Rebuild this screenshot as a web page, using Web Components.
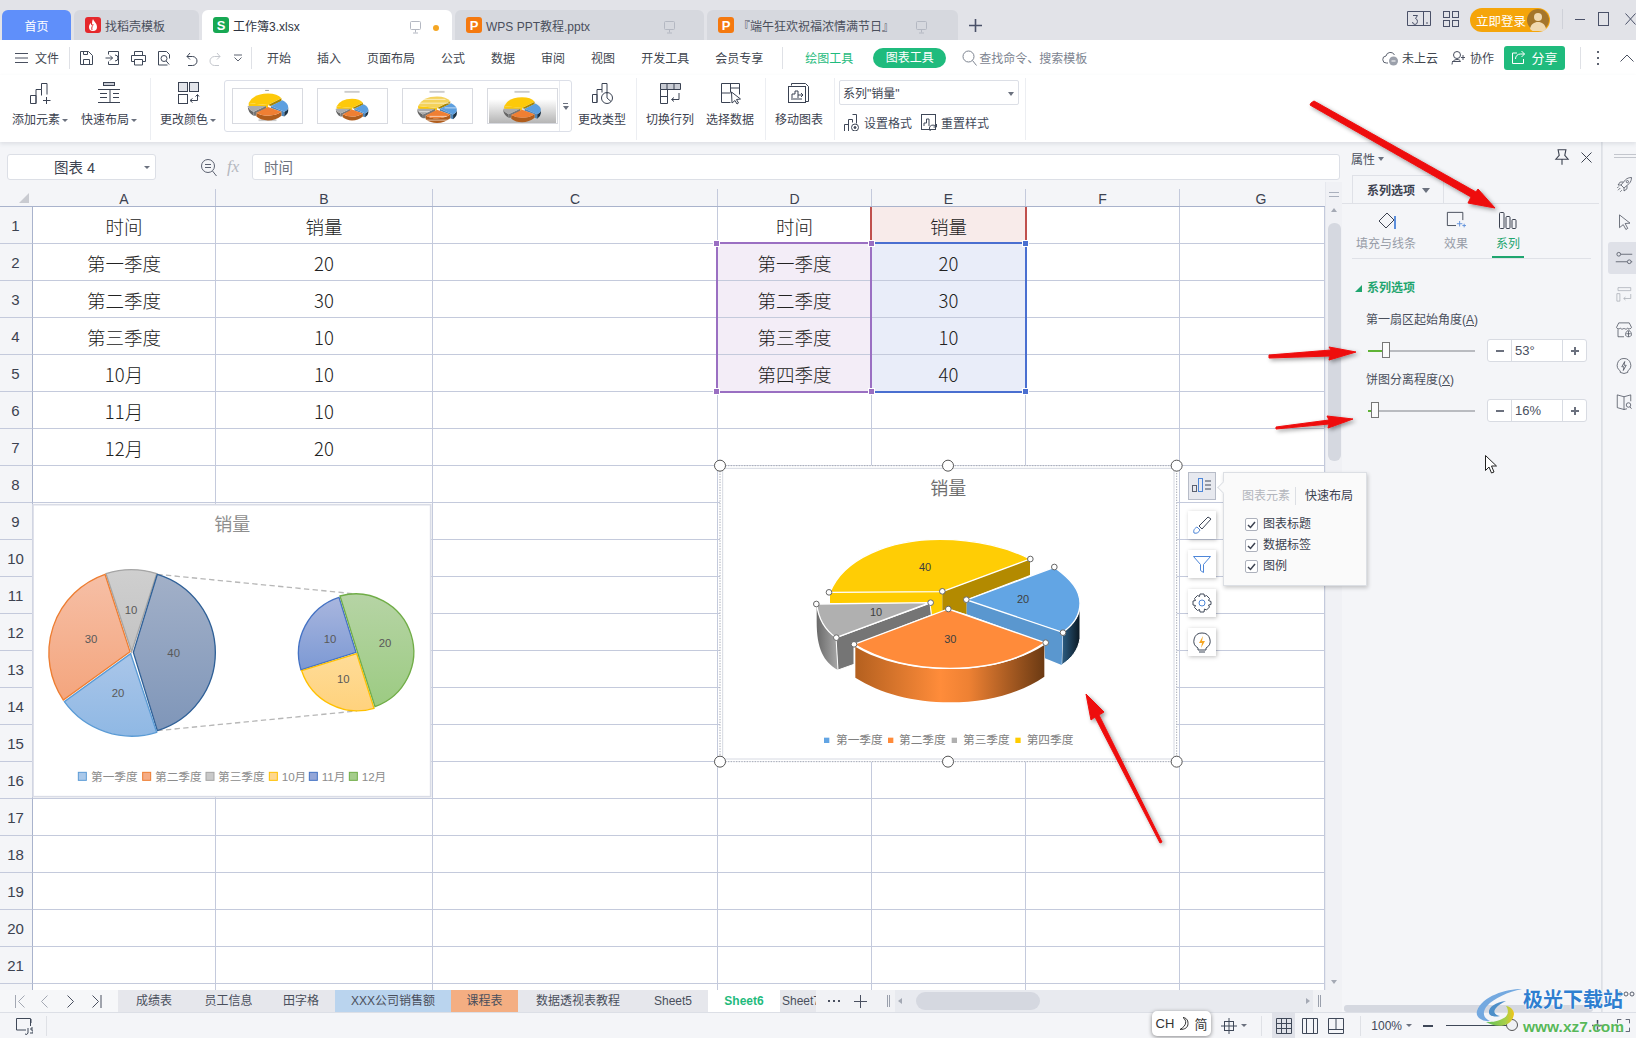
<!DOCTYPE html>
<html lang="zh">
<head>
<meta charset="utf-8">
<title>WPS 表格</title>
<style>
  html, body { margin: 0; padding: 0; }
  body {
    width: 1636px; height: 1038px; overflow: hidden; position: relative;
    font-family: "Liberation Sans", "Noto Sans CJK SC", sans-serif;
    font-size: 12px; color: #3c4250; background: #f4f5f8;
  }
  .left-col { display: flex; flex-direction: column; width: 1342px; }
  .work { display: flex; height: 870px; }
</style>
</head>
<body>
<wps-tabbar></wps-tabbar>
<wps-menu></wps-menu>
<wps-ribbon></wps-ribbon>
<div class="work">
  <div class="left-col">
    <wps-formula></wps-formula>
    <wps-sheet></wps-sheet>
    <wps-sheet-tabs></wps-sheet-tabs>
  </div>
  <wps-panel></wps-panel>
  <wps-strip></wps-strip>
</div>
<wps-status></wps-status>

<chart-pie-of-pie></chart-pie-of-pie>
<chart-pie-3d></chart-pie-3d>
<chart-tools></chart-tools>
<ime-box></ime-box>
<water-mark></water-mark>
<red-arrows></red-arrows>

<script>
// icono de trazo fino, mismo estilo en toda la app
const icon = (body, size = 24, box = 24) =>
  `<svg width="${size}" height="${size}" viewBox="0 0 ${box} ${box}" fill="none" stroke="currentColor" stroke-width="1" style="display:block">${body}</svg>`;

const ICONS = {
  addEl: '<path d="M2.500 14.500h5.500v8H2.500zM8 22.500v-14h5.500v6M13.500 8.500v-6h5.500v11"/><path d="M18.500 16v7M15 19.500h7.500"/>',
  layout: '<rect x="6.500" y="1.500" width="11" height="3" fill="#c9ccd4"/><path d="M1 8.500h22M3 12.500h7M3 16.500h7M1 21.500h22M13 8.500v13M16 12.500h6M16 16.500h6"/>',
  colors: '<rect x="2.500" y="1.500" width="9" height="9" fill="#e3e5ea"/><rect x="13.500" y="1.500" width="9" height="9" fill="#e3e5ea"/><rect x="2.500" y="13.500" width="9" height="9"/><path d="M21.500 14v5.500h-7M16.500 17.500l-2.500 2 2.500 2M19.500 15.500l2-2 1.500 2"/>',
  chType: '<path d="M2.500 13.500h4.500v8h-4.500zM7 21.500v-13h5v3M12 8.500v-6h5v10"/><circle cx="17" cy="17" r="5.500"/><path d="M17 11.500v5.500l4 3.500"/>',
  swap: '<path d="M2.500 2.500h20v6h-20zM9 2.500v6M16 2.500v6" fill="#c9ccd4"/><path d="M2.500 8.500v14h7v-14M2.500 15.500h7M21 12v6.500h-7M16 16.500l-2.500 2 2.500 2"/>',
  select: '<path d="M3.500 2.500h18v11M3.500 2.500v19h9M3.500 12h9M12.500 2.500v9M21.500 7h-9"/><path d="M13.500 11l9 7-4 .5 2 3.500-1.500 1-2-3.500-3 2.500z"/>',
  move: '<path d="M4.500 4.500V2.500h14l3 3v15H19"/><rect x="1.500" y="5.500" width="17" height="16"/><path d="M5 17v-4h3v-3h3v7M4 18h11M14 12l2 2-2 2M11 14h5"/>',
  format: '<path d="M1.500 11.500h4v7h-4zM5.500 18.500v-12h4v3M9.500 1.500h4v9"/><circle cx="12" cy="14.500" r="3.500"/><circle cx="12" cy="14.500" r="1" fill="currentColor"/>',
  reset: '<rect x="1.500" y="1.500" width="14" height="15"/><path d="M4 13v-3h2.500v-4H9v7M13 19a3.500 3.500 0 1 1 3-5M16.500 11v3h-3"/>',
  save: '<path d="M2.500 1.500h8l4 4v9h-12zM5.500 14.500v-5h6v5M5.500 1.500v3h4v-3"/>',
  sync: '<path d="M4.500 4.500v-3h10v13h-10v-3"/><path d="M1.500 8h7M6 5.500l2.500 2.500-2.500 2.500M11 5a3 3 0 0 1 0 6"/>',
  print: '<path d="M4.500 5.500v-4h8v4M4.500 11.500h-3v-6h14v6h-3"/><path d="M4.500 9.500h8v5.500h-8z"/>',
  preview: '<path d="M11.500 15h-9V1.500h8l3 3v4"/><circle cx="8" cy="8.500" r="3"/><path d="M10.200 11l3 3.500"/>',
  undo: '<path d="M5 6.500h5.500a4.500 4.500 0 0 1 0 9H6M5 6.500l3-3.500M5 6.500l3 3"/>',
  redo: '<path d="M12 6.500H6.500a4.500 4.500 0 0 0 0 9H11M12 6.500l-3-3.500M12 6.500l-3 3"/>',
  fill: '<path d="M3 10l8-8 7 7-8 8z"/><path d="M19 5v13" stroke="#5d8fdc" stroke-width="2"/>',
  effect: '<path d="M11 16H1.500V1.500h17V10" /><path d="M15 11v6M12 14h6M20 14v4M18 16h4" stroke="#5d8fdc"/>',
  series: '<rect x="1.500" y="1.500" width="4.500" height="16" rx="1"/><rect x="8" y="5.500" width="4" height="12" rx="1"/><rect x="14" y="8.500" width="4" height="9" rx="1"/>',
  rocket: '<path d="M8 12L14 5c2-2 5-3 8-3 0 3-1 6-3 8l-7 6zM8 12H4l3-4h4M12 16v4l4-3v-4M7 16l-3 3M9 19l-2 2M5 14l-2 2"/><circle cx="16.500" cy="7.500" r="1.500"/>',
  pointer: '<path d="M6 2.500l14 11-6.500 .5 3.500 6.500-2.500 1.500-3.500-6.500-5 4z"/>',
  sliders: '<circle cx="5" cy="7" r="2.500"/><path d="M8 7h15M1 17h15M21.500 17h1.500"/><circle cx="19" cy="17" r="2.500"/>',
  swapBox: '<path d="M4 3.500h17v4H4zM2.500 11.500h4v10h-4zM21 12v6h-9M14 16l-2.500 2 2.500 2"/>',
  shop: '<path d="M5 2.500h14l3 6a3 3 0 0 1-5 1 3 3 0 0 1-5 0 3 3 0 0 1-5 0 3 3 0 0 1-5-1zM4 11v10h8"/><path d="M18 12c-3 2-4 4-4 6s2 3 4 3 4-1 4-3-1-4-4-6zM18 13v8M15 17h6"/>',
  boltBulb: '<path d="M12 2a9 9 0 0 1 5 16.500v2l-5 1.500-5-1.500v-2A9 9 0 0 1 12 2z"/><path d="M13 6l-4 7h3l-1 5 4-7h-3z"/>',
  bookFind: '<path d="M12 5L3 2.500v17l9 2.500 4-1M12 5l9-2.500V11M12 5v17"/><circle cx="18" cy="16" r="3"/><path d="M20 18.500l2 2.500"/>',
  pin: '<path d="M5.500 2.500h7l-1 5 3 3.500h-11l3-3.500zM9 11v5"/>',
  monitor: '<rect x="2.500" y="2.500" width="10" height="8" rx="1"/><path d="M7.500 10.500v3M5 14h5"/>'
};

class WpsTabbar extends HTMLElement {
  constructor() { super(); this.attachShadow({ mode: 'open' }); }
  connectedCallback() {
    this.shadowRoot.innerHTML = `
      <style>
        :host { display: flex; height: 40px; background: #e2e3e8; box-sizing: border-box; padding: 10px 0 0 2px; gap: 3px; align-items: stretch; position: relative; }
        .tab { background: #d6d8de; border-radius: 6px 6px 0 0; display: flex; align-items: center; padding-left: 11px; box-sizing: border-box; color: #4a4f5c; position: relative; white-space: nowrap; overflow: hidden; }
        .tab.home { background: #5f8ffa; color: #fff; width: 69px; justify-content: center; padding: 0; }
        .tab.active { background: #fff; color: #2e3340; }
        .logo { width: 16px; height: 16px; border-radius: 3px; margin-right: 4px; display: flex; align-items: center; justify-content: center; color: #fff; font-weight: bold; font-size: 13px; flex: none; }
        .mon { position: absolute; top: 9px; color: #b4b8c2; }
        .dot { position: absolute; left: 231px; top: 15px; width: 6px; height: 6px; background: #f5a623; border-radius: 50%; }
        .plus { margin-left: 7px; width: 16px; display: flex; align-items: center; color: #4a5168; }
        .right { position: absolute; top: 0; left: 0; right: 0; height: 40px; pointer-events: none; }
        .right > * { position: absolute; }
        .login { left: 1470px; top: 8px; width: 80px; height: 24px; background: #f5a50a; border-radius: 12px; color: #fff; display: flex; align-items: center; padding-left: 6px; box-sizing: border-box; font-size: 12.500px; }
        .login svg { position: absolute; right: 1px; top: 1px; }
        .wsep { left: 1562px; top: 9px; width: 1px; height: 20px; background: #cfd1d8; }
      </style>
      <div class="tab home">首页</div>
      <div class="tab" style="width:125px"><span class="logo" style="background:#e5282c">
        <svg width="12" height="14" viewBox="0 0 12 14"><path d="M6 1c1 3 4 4 4 8a4 4 0 0 1-8 0c0-2 1-3 1.500-4 .5 1 .5 2 1.500 2.500C5 5 5 3 6 1z" fill="#fff"/><path d="M6 6c0 2-2 3-1 6" stroke="#e5282c" fill="none"/></svg>
      </span>找稻壳模板</div>
      <div class="tab active" style="width:250px"><span class="logo" style="background:#17a853">S</span>工作簿3.xlsx
        <span class="mon" style="left:206px">${icon(ICONS.monitor, 15, 15)}</span><span class="dot"></span></div>
      <div class="tab" style="width:249px"><span class="logo" style="background:#f5790f">P</span>WPS PPT教程.pptx
        <span class="mon" style="left:207px">${icon(ICONS.monitor, 15, 15)}</span></div>
      <div class="tab" style="width:251px"><span class="logo" style="background:#f5790f">P</span>『端午狂欢祝福浓情满节日』
        <span class="mon" style="left:207px">${icon(ICONS.monitor, 15, 15)}</span></div>
      <div class="plus"><svg width="15" height="15" viewBox="0 0 15 15" stroke="currentColor" stroke-width="1.600"><path d="M7.500 1v13M1 7.500h13"/></svg></div>
      <div class="right">
        <svg style="left:1407px;top:11px" width="25" height="16" viewBox="0 0 25 16" fill="none" stroke="#4a5168"><path d="M.5.500h23v14H.5zM16.500.500v14"/><path d="M6 4.500h4.500l-2 3a2.500 3 0 1 1-3 3.500M19 12h2"/></svg>
        <svg style="left:1443px;top:11px" width="16" height="16" viewBox="0 0 16 16" fill="none" stroke="#4a5168"><rect x=".5" y=".5" width="6" height="6"/><rect x="9.500" y=".5" width="6" height="6"/><rect x=".5" y="9.500" width="6" height="6"/><rect x="9.500" y="9.500" width="6" height="6"/></svg>
        <div class="login">立即登录
          <svg width="22" height="22" viewBox="0 0 22 22"><circle cx="11" cy="11" r="11" fill="#a5762a"/><circle cx="11" cy="8" r="4" fill="#f0d9b0"/><path d="M3 20c1-5 4-7 8-7s7 2 8 7a11 11 0 0 1-16 0z" fill="#f0d9b0"/></svg>
        </div>
        <div class="wsep"></div>
        <svg style="left:1575px;top:14px" width="10" height="10" stroke="#4a5168"><path d="M0 5.500h10"/></svg>
        <svg style="left:1598px;top:12px" width="11" height="14" fill="none" stroke="#4a5168"><rect x=".5" y=".5" width="10" height="13"/></svg>
        <svg style="left:1625px;top:13px" width="11" height="12" fill="none" stroke="#4a5168"><path d="M.5.500l10 11M10.500.500l-10 11"/></svg>
      </div>`;
  }
}

class WpsMenu extends HTMLElement {
  constructor() { super(); this.attachShadow({ mode: 'open' }); }
  connectedCallback() {
    const tabs = ['开始', '插入', '页面布局', '公式', '数据', '审阅', '视图', '开发工具', '会员专享'];
    const quick = ['save', 'sync', 'print', 'preview', 'undo', 'redo'];
    this.shadowRoot.innerHTML = `
      <style>
        :host { display: flex; height: 35px; background: #fff; align-items: center; padding-left: 15px; box-sizing: border-box; white-space: nowrap; color: #41464f; }
        .sep { width: 1px; height: 22px; background: #dfe1e6; flex: none; }
        .quick { display: flex; gap: 10px; align-items: center; margin-left: 8px; color: #3f4858; }
        .tabs { display: flex; gap: 26px; margin-left: 15px; }
        .pill { margin-left: 20px; width: 73px; height: 20px; line-height: 20px; border-radius: 10px; background: #1fbb7d; color: #fff; text-align: center; }
        .find { margin-left: 16px; display: flex; align-items: center; gap: 2px; color: #7d8490; }
        .right { margin-left: auto; display: flex; align-items: center; }
        .share { margin-left: 10px; width: 61px; height: 24px; background: #1fbb7d; border-radius: 3px; color: #fff; display: flex; align-items: center; justify-content: center; gap: 5px; font-size: 13px; }
      </style>
      <svg width="13" height="12" stroke="#4a5060"><path d="M0 1.500h13M0 6h13M0 10.500h13"/></svg>
      <span style="margin-left:7px">文件</span>
      <div class="sep" style="margin-left:10px"></div>
      <div class="quick">
        ${quick.map(k => `<span style="${k === 'redo' ? 'color:#c4c7cd' : ''}">${icon(ICONS[k], 16, 16)}</span>`).join('')}
        <svg width="8" height="8" fill="none" stroke="#5d6370"><path d="M0 1h8M.5 3.500l3.500 3.500 3.500-3.500"/></svg>
      </div>
      <div class="sep" style="margin-left:9px"></div>
      <div class="tabs">${tabs.map(t => `<span>${t}</span>`).join('')}</div>
      <div class="sep" style="margin-left:19px"></div>
      <span style="margin-left:22px;color:#1fbb7d">绘图工具</span>
      <div class="pill">图表工具</div>
      <div class="find">
        <svg width="15" height="16" fill="none" stroke="#7d8490"><circle cx="6.500" cy="6.500" r="5.500"/><path d="M10.500 10.500l4 5"/></svg>
        查找命令、搜索模板
      </div>
      <div class="right">
        <svg width="17" height="17" viewBox="0 0 17 17" fill="none" stroke="#5d6370"><path d="M6 14H4.500a3.500 3.500 0 0 1-.5-7A4.500 4.500 0 0 1 12.500 6"/><circle cx="11.500" cy="12" r="4.500" fill="#9ba0ab" stroke="none"/><path d="M9.500 12h4" stroke="#fff"/></svg>
        <span style="margin-left:3px">未上云</span>
        <svg style="margin-left:13px" width="15" height="16" viewBox="0 0 15 16" fill="none" stroke="#4a5060"><circle cx="6" cy="5" r="3.500"/><path d="M1 14.500c0-3 2-5 5-5 2 0 3 .5 3.500 2H1M12 5v5M10 7.500h4"/></svg>
        <span style="margin-left:4px">协作</span>
        <div class="share">
          <svg width="15" height="15" viewBox="0 0 15 15" fill="none" stroke="#fff"><path d="M6 3H1.500v10.500h11V9M4.500 9c0-3 2-5 5-5h4M10.500 1l3 3-3 3"/></svg>分享
        </div>
        <div class="sep" style="margin-left:15px"></div>
        <svg style="margin-left:16px" width="3" height="14" fill="#5d6370"><rect y="0" width="2" height="2"/><rect y="6" width="2" height="2"/><rect y="12" width="2" height="2"/></svg>
        <svg style="margin-left:20px;margin-right:2px" width="14" height="8" fill="none" stroke="#4a5060"><path d="M.5 7.500L7 1l6.500 6.500"/></svg>
      </div>`;
  }
}

// boton grande de la cinta: icono arriba, etiqueta abajo
class RbButton extends HTMLElement {
  constructor() { super(); this.attachShadow({ mode: 'open' }); }
  connectedCallback() {
    const caret = this.hasAttribute('caret');
    this.shadowRoot.innerHTML = `
      <style>
        :host { display: flex; flex-direction: column; align-items: center; box-sizing: border-box; padding-top: 6px; flex: none; }
        .ic { height: 24px; color: #3a4252; }
        .lb { margin-top: 7px; line-height: 16px; white-space: nowrap; display: flex; align-items: center; color: #3c4250; }
        i { display: block; margin-left: 2px; border: 3px solid transparent; border-top: 3.500px solid #6b717e; border-bottom: 0; }
      </style>
      <div class="ic">${icon(ICONS[this.getAttribute('icon')])}</div>
      <div class="lb">${this.getAttribute('label')}${caret ? '<i></i>' : ''}</div>`;
  }
}

// miniatura de la galeria de estilos
const miniPie = (cx, cy, s, stripes) => `
  <g transform="translate(${cx} ${cy}) scale(${s})">
    <path d="M0-1L14-8V-5L3 0z" fill="#a88500"/>
    <path d="M-20-3L0-1V2L-20 0z" fill="#fdc90a"/>
    <path d="M-20-3Q-15-13 0-13 10-13 14-8L0-1z" fill="${stripes ? '#f4d25a' : '#fdc90a'}"/>
    <path d="M-21 0Q-20 4-15 6V10Q-21 7-21 0z" fill="#666"/>
    <path d="M-15 6L-2 0V3L-12 7V10H-15z" fill="#777"/>
    <path d="M-21 0H-2L-15 6Q-20 4-21 0z" fill="#acacac"/>
    <path d="M3 0L17 6V11L14 10V6L3 2z" fill="#4f86ba"/>
    <path d="M17 6Q21 4 21 1V5Q21 8 17 11z" fill="#1c3347"/>
    <path d="M3 0L15-6Q21-3 21 1 21 4 17 6z" fill="#5d9fdf"/>
    <path d="M-12 7Q-7 10 0 10 8 10 14 6V10Q8 15 0 15-7 15-12 11z" fill="#b05d1c"/>
    <path d="M0 1L14 6Q8 10 0 10-7 10-12 7z" fill="#ef7f33"/>
    ${stripes ? '<path d="M-19-6H14M-14-10H9M-8 8H10M-11 12H13M-19 3H-8M8-1H20" stroke="#fff" stroke-width=".8" opacity=".8"/>' : ''}
  </g>`;

class RbGallery extends HTMLElement {
  constructor() { super(); this.attachShadow({ mode: 'open' }); }
  connectedCallback() {
    const thumbs = [
      `<rect x="33" y="1" width="4" height="1" fill="#999"/><rect x="26" y="32" width="19" height="2" fill="#ccc"/>${miniPie(36, 18, 1.02)}`,
      `<rect x="27" y="2" width="16" height="2" fill="#ccc"/>${miniPie(35, 21, .82)}`,
      `<rect x="27" y="2" width="16" height="2" fill="#ccc"/>${miniPie(35, 21, 1, true)}`,
      `<defs><linearGradient id="gr" x1="0" y1="0" x2="0" y2="1"><stop offset=".3" stop-color="#fff"/><stop offset="1" stop-color="#b5b5b5"/></linearGradient></defs><rect width="71" height="36" fill="url(#gr)"/><rect x="27" y="2" width="16" height="2" fill="#ccc"/>${miniPie(35, 21, .95)}`
    ];
    this.shadowRoot.innerHTML = `
      <style>
        :host { display: flex; width: 348px; height: 52px; box-sizing: border-box; border: 1px solid #dcdfe8; border-radius: 3px; margin-top: 5px; padding-left: 7px; gap: 14px; align-items: center; position: relative; flex: none; background: #fff; }
        svg.t { display: block; border: 1px solid #d8dae0; width: 71px; height: 36px; box-sizing: border-box; }
        .sc { position: absolute; right: 0; top: 0; bottom: 0; width: 11px; border-left: 1px solid #e8eaef; display: flex; flex-direction: column; align-items: center; justify-content: center; gap: 2px; }
        .sc b { display: block; width: 5px; height: 1px; background: #6b717e; }
        .sc i { display: block; border: 3px solid transparent; border-top: 4px solid #6b717e; border-bottom: 0; }
      </style>
      ${thumbs.map(t => `<svg class="t" viewBox="0 0 71 36">${t}</svg>`).join('')}
      <div class="sc"><b></b><i></i></div>`;
  }
}

class WpsRibbon extends HTMLElement {
  constructor() { super(); this.attachShadow({ mode: 'open' }); }
  connectedCallback() {
    this.shadowRoot.innerHTML = `
      <style>
        :host { display: flex; height: 67px; background: #fff; align-items: flex-start; position: relative; z-index: 2; box-shadow: 0 2px 4px rgba(60,70,90,.12); white-space: nowrap; }
        .sep { width: 1px; height: 62px; background: #eceef2; flex: none; margin-top: 3px; }
        .combo { width: 180px; height: 25px; margin-top: 5px; border: 1px solid #dcdfe6; border-radius: 2px; box-sizing: border-box; display: flex; align-items: center; padding-left: 3px; position: relative; }
        .combo i { position: absolute; right: 4px; top: 11px; border: 3px solid transparent; border-top: 4px solid #6b717e; border-bottom: 0; }
        .mini { display: flex; align-items: center; margin-top: 8px; padding-left: 4px; gap: 3px; }
        .mini span { color: #3f4858; margin-right: 5px; }
        .side { width: 180px; flex: none; margin-left: 4px; }
      </style>
      <rb-button icon="addEl" label="添加元素" caret style="width:64px;margin-left:8px"></rb-button>
      <rb-button icon="layout" label="快速布局" caret style="width:64px;margin-left:5px"></rb-button>
      <div class="sep" style="margin-left:9px"></div>
      <rb-button icon="colors" label="更改颜色" caret style="width:64px;margin-left:5px"></rb-button>
      <rb-gallery style="margin-left:4px"></rb-gallery>
      <rb-button icon="chType" label="更改类型" style="width:48px;margin-left:6px"></rb-button>
      <div class="sep" style="margin-left:10px"></div>
      <rb-button icon="swap" label="切换行列" style="width:48px;margin-left:9px"></rb-button>
      <rb-button icon="select" label="选择数据" style="width:48px;margin-left:12px"></rb-button>
      <div class="sep" style="margin-left:11px"></div>
      <rb-button icon="move" label="移动图表" style="width:48px;margin-left:9px"></rb-button>
      <div class="sep" style="margin-left:11px"></div>
      <div class="side">
        <div class="combo">系列"销量"<i></i></div>
        <div class="mini">
          <div style="color:#3f4858">${icon(ICONS.format, 18, 18)}</div><span>设置格式</span>
          <div style="color:#3f4858">${icon(ICONS.reset, 18, 18)}</div><span>重置样式</span>
        </div>
      </div>
      <div class="sep" style="margin-left:6px"></div>`;
  }
}

class WpsFormula extends HTMLElement {
  constructor() { super(); this.attachShadow({ mode: 'open' }); }
  connectedCallback() {
    this.shadowRoot.innerHTML = `
      <style>
        :host { display: flex; height: 40px; background: #f4f5f8; align-items: flex-start; padding: 12px 0 0 7px; box-sizing: border-box; }
        .box { height: 26px; background: #fff; border: 1px solid #dcdfe6; border-radius: 3px; box-sizing: border-box; display: flex; align-items: center; font-size: 14.500px; padding-bottom: 2px; }
        .name { width: 149px; justify-content: center; position: relative; padding-right: 14px; color: #3c4250; }
        .name i { position: absolute; right: 5px; top: 11px; border: 3px solid transparent; border-top: 3.500px solid #6b717e; border-bottom: 0; }
        .fx { font: italic 17px "Liberation Serif", serif; color: #b5b8bf; margin-left: 9px; width: 17px; line-height: 26px; }
        .input { width: 1088px; margin-left: 8px; padding-left: 11px; color: #6f7480; }
      </style>
      <div class="box name">图表 4<i></i></div>
      <svg style="margin:4px 0 0 44px" width="18" height="19" viewBox="0 0 18 19" fill="none" stroke="#5b6170"><circle cx="8" cy="8" r="6.500"/><path d="M5 6.500h6M5 9.500h6M12.500 13l4 5"/></svg>
      <div class="fx">fx</div>
      <div class="box input">时间</div>`;
  }
}

class WpsSheet extends HTMLElement {
  constructor() { super(); this.attachShadow({ mode: 'open' }); }
  connectedCallback() {
    const cols = [['A', 183], ['B', 217], ['C', 285], ['D', 154], ['E', 154], ['F', 154], ['G', 145]];
    const cells = {
      A: ['时间', '第一季度', '第二季度', '第三季度', '10月', '11月', '12月'],
      B: ['销量', 20, 30, 10, 10, 10, 20],
      D: ['时间', '第一季度', '第二季度', '第三季度', '第四季度'],
      E: ['销量', 20, 30, 10, 40]
    };
    const tint = (c, r) => {
      if (c === 'E' && r === 0) return 'pink';
      if (c === 'D' && r >= 1 && r <= 4) return 'lilac';
      if (c === 'E' && r >= 1 && r <= 4) return 'blue';
      return '';
    };
    let rows = '';
    for (let r = 0; r < 22; r++) {
      rows += `<div class="row"><div class="rh">${r < 21 ? r + 1 : ''}</div>` + cols.map(([c, w]) => {
        const v = cells[c] && cells[c][r] !== undefined ? cells[c][r] : '';
        return `<div class="cell ${tint(c, r)}" style="width:${w}px">${v}</div>`;
      }).join('') + '</div>';
    }
    const dots = [[716, 243], [871, 243], [1025, 243], [716, 391], [871, 391], [1025, 391]];
    this.shadowRoot.innerHTML = `
      <style>
        :host { display: flex; height: 808px; position: relative; overflow: hidden; background: #fff; }
        .grid { width: 1325px; flex: none; }
        .head { display: flex; height: 25px; background: #f4f5f8; border-bottom: 1px solid #a9b3cc; box-sizing: border-box; }
        .corner { width: 33px; position: relative; }
        .corner::after { content: ""; position: absolute; left: 19px; top: 11px; border-style: solid; border-width: 0 0 10px 10px; border-color: transparent transparent #c9cbd1 transparent; }
        .ch { box-sizing: border-box; border-right: 1px solid #c4cadc; text-align: center; font-size: 14px; line-height: 20px; margin-top: 7px; height: 17px; color: #3c4250; }
        .ch:last-child { padding-left: 17px; border-right: 0; }
        .row { display: flex; height: 37px; }
        .rh { width: 33px; box-sizing: border-box; background: #f4f5f8; border-right: 1px solid #a9b3cc; border-bottom: 1px solid #c4cadc; text-align: center; line-height: 38px; font-size: 15px; color: #3c4250; padding-right: 1px; }
        .cell { box-sizing: border-box; border-right: 1px solid #c4cadc; border-bottom: 1px solid #c4cadc; text-align: center; line-height: 39px; font-family: "Noto Sans CJK SC", sans-serif; font-size: 18.500px; font-weight: 300; color: #222; white-space: nowrap; }
        .pink { background: #f8ebea; }
        .lilac { background: #f3edf7; }
        .blue { background: #e9edf9; }
        .rng { position: absolute; box-sizing: border-box; }
        .dot { position: absolute; width: 7px; height: 7px; margin: -3px 0 0 -3px; box-sizing: border-box; border: 1px solid #fff; }
        .vbar { flex: 1; background: #f0f1f5; position: relative; border-left: 1px solid #e6e8ee; box-sizing: border-box; }
        .grip { position: absolute; left: 3px; top: 10px; width: 10px; height: 5px; border-top: 1px solid #aab0bd; border-bottom: 1px solid #aab0bd; box-sizing: border-box; }
        .up { position: absolute; left: 5px; top: 26px; border: 3px solid transparent; border-bottom: 4px solid #a4a9b4; border-top: 0; }
        .down { position: absolute; left: 5px; bottom: 6px; border: 3px solid transparent; border-top: 4px solid #a4a9b4; border-bottom: 0; }
        .thumb { position: absolute; left: 2px; top: 41px; width: 13px; height: 238px; border-radius: 6px; background: #d5d8e0; }
      </style>
      <div class="grid">
        <div class="head"><div class="corner"></div>${cols.map(([c, w]) => `<div class="ch" style="width:${w}px">${c}</div>`).join('')}</div>
        ${rows}
      </div>
      <div class="vbar"><div class="grip"></div><div class="up"></div><div class="thumb"></div><div class="down"></div></div>
      <div class="rng" style="left:870px;top:25px;width:157px;height:36px;border-left:2px solid #c0504d;border-right:2px solid #c0504d"></div>
      <div class="rng" style="left:716px;top:60px;width:156px;height:151px;border:2px solid #9a6fc2"></div>
      <div class="rng" style="left:872px;top:60px;width:155px;height:151px;border:2px solid #4a6fd0;border-left:0"></div>
      ${dots.map(([x, y]) => `<div class="dot" style="left:${x}px;top:${y - 182}px;background:${x === 1025 ? '#4a6fd0' : '#9a6fc2'}"></div>`).join('')}
      `;
  }
}

class WpsSheetTabs extends HTMLElement {
  constructor() { super(); this.attachShadow({ mode: 'open' }); }
  connectedCallback() {
    const tabs = [
      ['成绩表', 72], ['员工信息', 77], ['田字格', 68], ['XXX公司销售额', 116, '#bad4ee'],
      ['课程表', 67, '#f4ae82'], ['数据透视表教程', 120], ['Sheet5', 70]
    ];
    this.shadowRoot.innerHTML = `
      <style>
        :host { display: flex; height: 22px; background: #f1f2f5; align-items: stretch; white-space: nowrap; overflow: hidden; position: relative; }
        .nav { width: 118px; flex: none; position: relative; background: #f6f7f9; }
        .nav svg { position: absolute; top: 5px; }
        .tab { text-align: center; line-height: 22px; flex: none; box-sizing: border-box; background: #e6e7ec; color: #4a4f5c; }
        .on { background: #fff; color: #1fbb7d; font-weight: bold; width: 72px; }
        .cut { width: 36px; padding-left: 2px; text-align: left; overflow: hidden; }
        .track { position: absolute; left: 895px; right: 29px; top: 0; bottom: 0; background: #e8eaef; }
        .track b { position: absolute; left: 21px; top: 2px; width: 124px; height: 18px; background: #d5d8e0; border-radius: 9px; }
        .track i { position: absolute; top: 8px; border: 3px solid transparent; }
        .bar { position: absolute; top: 5px; width: 3px; height: 12px; border-left: 1px solid #9aa0ac; border-right: 1px solid #9aa0ac; box-sizing: border-box; }
      </style>
      <div class="nav">
        <svg style="left:15px" width="11" height="13" fill="none" stroke="#a3a8b3"><path d="M.5 0v13M9.500 .5l-6 6 6 6"/></svg>
        <svg style="left:40px" width="9" height="13" fill="none" stroke="#a3a8b3"><path d="M7.500 .5l-6 6 6 6"/></svg>
        <svg style="left:66px" width="9" height="13" fill="none" stroke="#4a5060"><path d="M1.500 .5l6 6-6 6"/></svg>
        <svg style="left:91px" width="11" height="13" fill="none" stroke="#4a5060"><path d="M1.500 .5l6 6-6 6M10 0v13"/></svg>
      </div>
      ${tabs.map(([t, w, bg]) => `<div class="tab" style="width:${w}px;${bg ? 'background:' + bg : ''}">${t}</div>`).join('')}
      <div class="tab on">Sheet6</div>
      <div class="tab cut">Sheet7</div>
      <svg style="position:absolute;left:828px;top:10px" width="14" height="3" fill="#4a5060"><rect width="2" height="2"/><rect x="5" width="2" height="2"/><rect x="10" width="2" height="2"/></svg>
      <svg style="position:absolute;left:854px;top:5px" width="13" height="13" stroke="#4a5060"><path d="M6.500 0v13M0 6.500h13"/></svg>
      <div class="bar" style="left:887px"></div>
      <div class="track"><i style="left:3px;border-right:4px solid #a4a9b4;border-left:0"></i><b></b><i style="right:3px;border-left:4px solid #a4a9b4;border-right:0"></i></div>
      <div class="bar" style="left:1318px"></div>`;
  }
}

class PropSlider extends HTMLElement {
  constructor() { super(); this.attachShadow({ mode: 'open' }); }
  connectedCallback() {
    const at = +this.getAttribute('at');
    this.shadowRoot.innerHTML = `
      <style>
        :host { display: flex; align-items: center; margin-left: 26px; height: 23px; }
        .track { width: 107px; height: 2px; background: #b9bbc0; position: relative; margin-top: 1px; }
        .fill { position: absolute; left: 0; top: 0; height: 2px; background: #5fb336; width: ${at}px; }
        .thumb { position: absolute; left: ${at}px; top: -8px; width: 8px; height: 16px; background: #fbfbfc; border: 1px solid #777; box-sizing: border-box; }
        .step { margin-left: 12px; width: 100px; height: 23px; background: #fff; border: 1px solid #d8dbe2; border-radius: 3px; box-sizing: border-box; display: flex; align-items: stretch; }
        .btn { width: 23px; display: flex; align-items: center; justify-content: center; flex: none; }
        .val { flex: 1; border-left: 1px solid #d8dbe2; border-right: 1px solid #d8dbe2; padding-left: 3px; line-height: 21px; color: #4a5060; font-size: 13px; }
      </style>
      <div class="track"><div class="fill"></div><div class="thumb"></div></div>
      <div class="step">
        <div class="btn"><svg width="8" height="2"><rect width="8" height="2" fill="#6b717e"/></svg></div>
        <div class="val"><slot></slot></div>
        <div class="btn"><svg width="8" height="8"><path d="M4 0v8M0 4h8" stroke="#6b717e" stroke-width="2"/></svg></div>
      </div>`;
  }
}

class WpsPanel extends HTMLElement {
  constructor() { super(); this.attachShadow({ mode: 'open' }); }
  connectedCallback() {
    this.shadowRoot.innerHTML = `
      <style>
        :host { display: block; width: 260px; box-sizing: border-box; background: #f4f5f8; border-right: 1px solid #dde0e6; position: relative; color: #4a4f5c; white-space: nowrap; }
        .head { height: 33px; display: flex; align-items: center; padding: 0 9px 0 9px; }
        .head i { margin-left: 3px; border: 3px solid transparent; border-top: 4px solid #6b717e; border-bottom: 0; }
        .tabrow { height: 28px; border-bottom: 1px solid #dfe1e7; padding-left: 10px; margin-right: 2px; }
        .tab { width: 92px; height: 28px; box-sizing: border-box; border: 1px solid #dfe1e7; border-bottom: 0; background: #f4f5f8; display: flex; align-items: center; padding-left: 14px; font-weight: bold; color: #3c4250; gap: 7px; }
        .tab i { border: 4px solid transparent; border-top: 5px solid #6b717e; border-bottom: 0; margin-top: 2px; }
        .subs { margin: 0 10px; height: 54px; border-bottom: 1px solid #dfe1e7; display: flex; }
        .sub { display: flex; flex-direction: column; align-items: center; padding-top: 7px; box-sizing: border-box; color: #979ca7; height: 54px; }
        .sub span { margin-top: 5px; line-height: 16px; }
        .sub.on { color: #1fa56f; border-bottom: 2px solid #1fa56f; }
        .sub svg { color: #3c4250; }
        .sec { margin: 21px 0 0 13px; color: #1fa56f; font-weight: bold; display: flex; align-items: center; gap: 5px; line-height: 16px; }
        .sec i { border-style: solid; border-width: 0 0 7px 7px; border-color: transparent transparent #1fa56f transparent; }
        .lb { margin: 16px 0 0 24px; line-height: 16px; }
        u { text-decoration: underline; }
        .scroll { position: absolute; left: 2px; right: 8px; bottom: 0; height: 7px; background: #d5d8e0; border-radius: 3px; }
      </style>
      <div class="head">属性<i></i>
        <span style="margin-left:auto;color:#3c4250;margin-top:-4px">${icon(ICONS.pin, 20, 18)}</span>
        <svg style="margin:-3px 0 0 9px" width="11" height="11" fill="none" stroke="#3c4250"><path d="M.5.500l10 10M10.500.500l-10 10"/></svg>
      </div>
      <div class="tabrow"><div class="tab">系列选项<i></i></div></div>
      <div class="subs">
        <div class="sub" style="width:60px;margin-left:4px">${icon(ICONS.fill, 20, 20)}<span>填充与线条</span></div>
        <div class="sub" style="width:24px;margin-left:28px">${icon(ICONS.effect, 20, 22)}<span>效果</span></div>
        <div class="sub on" style="width:32px;margin-left:24px">${icon(ICONS.series, 20, 20)}<span>系列</span></div>
      </div>
      <div class="sec"><i></i>系列选项</div>
      <div class="lb">第一扇区起始角度(<u>A</u>)</div>
      <prop-slider at="14" style="margin-top:11px">53°</prop-slider>
      <div class="lb" style="margin-top:10px">饼图分离程度(<u>X</u>)</div>
      <prop-slider at="3" style="margin-top:11px">16%</prop-slider>
      <div class="scroll"></div>`;
  }
}

class WpsStrip extends HTMLElement {
  constructor() { super(); this.attachShadow({ mode: 'open' }); }
  connectedCallback() {
    const items = [['rocket', 9], ['pointer', 1], ['sliders', 2, true], ['swapBox', 2], ['shop', 0], ['boltBulb', 0], ['bookFind', 0]];
    this.shadowRoot.innerHTML = `
      <style>
        :host { display: block; width: 34px; background: #f4f5f8; border-left: 1px solid #e4e6eb; box-sizing: border-box; position: relative; }
        .grip { margin: 12px 0 0 11px; width: 23px; height: 4px; border-top: 1px solid #c3c6cd; border-bottom: 1px solid #c3c6cd; box-sizing: border-box; }
        .it { height: 36px; padding-left: 12px; color: #454b58; display: flex; align-items: center; box-sizing: border-box; }
        .it.on { background: #dfe1e8; height: 32px; margin-left: 5px; padding-left: 7px; border-radius: 3px 0 0 3px; }
        .dim { color: #a9adb6; }
        .more { position: absolute; left: 14px; bottom: 15px; }
      </style>
      <div class="grip"></div>
      ${items.map(([k, m, on]) => `<div class="it ${on ? 'on' : ''} ${k === 'swapBox' ? 'dim' : ''}" style="margin-top:${m}px">${icon(ICONS[k], 18, 24)}</div>`).join('')}
      <svg class="more" width="18" height="6" fill="none" stroke="#5a606d"><circle cx="3" cy="3" r="2"/><circle cx="9" cy="3" r="2"/><circle cx="15" cy="3" r="2"/></svg>`;
  }
}

class WpsStatus extends HTMLElement {
  constructor() { super(); this.attachShadow({ mode: 'open' }); }
  connectedCallback() {
    this.shadowRoot.innerHTML = `
      <style>
        :host { display: flex; height: 26px; background: #f4f5f8; border-top: 1px solid #dcdfe6; box-sizing: border-box; align-items: center; padding-left: 15px; color: #3f4858; }
        .sep { width: 1px; height: 20px; background: #dfe1e6; }
        .rt { margin-left: auto; display: flex; align-items: center; height: 25px; }
        .act { background: #dfe1e8; width: 23px; height: 25px; display: flex; align-items: center; justify-content: center; }
        i { display: block; border: 3px solid transparent; border-top: 3.500px solid #6b717e; border-bottom: 0; }
        .sl { width: 66px; height: 1px; background: #3f4858; margin-left: 13px; position: relative; }
        .sl b { position: absolute; right: -6px; top: -6px; width: 12px; height: 12px; border-radius: 50%; background: #f0f1f4; border: 1px solid #555; box-sizing: border-box; }
      </style>
      <svg width="18" height="18" viewBox="0 0 18 18" fill="none" stroke="#3f4858"><path d="M11 13H1.500V1.500h14V9M16 2v4M13 11v5a2 2 0 0 1-3 1M18 11h-2v2h2v3h-3" /></svg>
      <div class="sep" style="margin-left:13px"></div>
      <div class="rt">
        <svg width="16" height="16" fill="none" stroke="#3f4858"><rect x="3.500" y="3.500" width="9" height="9"/><path d="M8 0v16M0 8h16"/></svg><i style="margin-left:4px"></i>
        <div class="sep" style="margin-left:14px"></div>
        <div class="act" style="margin-left:10px"><svg width="16" height="16" fill="none" stroke="#3f4858"><path d="M.5.500h15v15H.5zM.5 5.500h15M.5 10.500h15M5.500.500v15M10.500.500v15"/></svg></div>
        <svg style="margin-left:7px" width="16" height="16" fill="none" stroke="#3f4858"><path d="M.5.500h15v15H.5zM4.500.500v15M11.500.500v15"/></svg>
        <svg style="margin-left:10px" width="16" height="16" fill="none" stroke="#3f4858"><path d="M.5.500h15v15H.5zM.5 11.500h15M8 .5v11"/></svg>
        <div class="sep" style="margin-left:16px"></div>
        <span style="margin-left:10px">100%</span><i style="margin-left:4px"></i>
        <svg style="margin-left:11px" width="10" height="2"><rect width="10" height="2" fill="#3f4858"/></svg>
        <div class="sl"><b></b></div>
        <svg style="margin-left:79.500px" width="11" height="11" stroke="#3f4858" stroke-width="1.500"><path d="M5.500 0v11M0 5.500h11"/></svg>
        <svg style="margin:0 6px 0 14.500px" width="13" height="13" viewBox="0 0 15 15" fill="none" stroke="#3f4858"><path d="M.5 5V.5H5M10 .5h4.500V5M14.500 10v4.500H10M5 14.500H.5V10"/></svg>
      </div>`;
  }
}

class ChartPieOfPie extends HTMLElement {
  constructor() { super(); this.attachShadow({ mode: 'open' }); }
  connectedCallback() {
    const grad = (id, a, b) => `<linearGradient id="${id}" x1="0" y1="0" x2="0" y2="1"><stop offset="0" stop-color="${a}"/><stop offset="1" stop-color="${b}"/></linearGradient>`;
    const label = (x, y, t) => `<text x="${x}" y="${y}" text-anchor="middle" font-size="34" fill="#595959">${t}</text>`;
    const legend = [[175, '#5b9bd5', '#a9c8ea', 213, '第一季度'], [368, '#ed7d31', '#f5ac85', 405, '第二季度'], [558, '#a5a5a5', '#c9c9c9', 594, '第三季度'], [748, '#ffc000', '#fed88f', 785, '10月'], [868, '#4472c4', '#94a6d8', 905, '11月'], [988, '#70ad47', '#a5cd8b', 1025, '12月']];
    this.shadowRoot.innerHTML = `
      <style>
        :host { position: absolute; left: 20px; top: 495px; width: 420px; height: 310px; display: block; }
        svg { display: block; }
      </style>
      <svg width="420" height="310" viewBox="0 0 1260 930">
        <defs>
          ${grad('g30', '#f6bfa6', '#f4a57d')}${grad('g10', '#cfcfcf', '#c3c3c3')}${grad('g40', '#a2b0c8', '#7f96b9')}${grad('g20', '#aac6e9', '#8fb8e4')}
          ${grad('s10', '#a9b6de', '#7c99d4')}${grad('s1', '#fedc98', '#ffd27d')}${grad('s2', '#b6d4a5', '#9ccb82')}
        </defs>
        <rect x="39" y="29" width="1193" height="876" fill="#fff" stroke="#d9dce6" stroke-width="5"/>
        <text x="637" y="108" text-anchor="middle" font-size="54" fill="#8e8e8e">销量</text>
        <path d="M412 238L1010 297M412 707L1010 648" stroke="#b7b7b7" stroke-width="4" stroke-dasharray="16 10" fill="none"/>
        <g stroke-width="4">
          <path d="M335 470L258 236A250 250 0 0 1 410 236Z" fill="url(#g10)" stroke="#a5a5a5"/>
          <path d="M340 472L412 238A245 245 0 0 1 412 707Z" fill="url(#g40)" stroke="#2f6097"/>
          <path d="M332 476L410 712A250 250 0 0 1 133 620Z" fill="url(#g20)" stroke="#5b9bd5"/>
          <path d="M330 470L130 615A250 250 0 0 1 255 238Z" fill="url(#g30)" stroke="#ed7d31"/>
          <path d="M1008 472L957 307A176 176 0 0 0 843 525Z" fill="url(#s10)" stroke="#4472c4"/>
          <path d="M1010 476L845 527A176 176 0 0 0 1062 640Z" fill="url(#s1)" stroke="#ffc000"/>
          <path d="M1012 470L960 303A174.200 174.200 0 0 1 1065 635Z" fill="url(#s2)" stroke="#70ad47"/>
        </g>
        ${label(333, 357, 10)}${label(213, 444, 30)}${label(461, 486, 40)}${label(294, 606, 20)}
        ${label(930, 444, 10)}${label(1095, 456, 20)}${label(970, 564, 10)}
        ${legend.map(([x, s, f, tx, t]) => `<rect x="${x}" y="832" width="24" height="24" fill="${f}" stroke="${s}" stroke-width="3"/><text x="${tx}" y="857" font-size="35" fill="#8c8c8c">${t}</text>`).join('')}
      </svg>`;
  }
}

class ChartPie3d extends HTMLElement {
  constructor() { super(); this.attachShadow({ mode: 'open' }); }
  connectedCallback() {
    const dots = [[961, 312], [1033, 336], [1059, 533], [1007, 563], [715, 462], [769, 434], [697, 409], [662, 443], [357, 412], [319, 447], [379, 548], [432, 568]];
    const big = [[30, 32], [714, 32], [1400, 32], [30, 920], [714, 920], [1400, 920]];
    const label = (x, y, t) => `<text x="${x}" y="${y}" text-anchor="middle" font-size="33" fill="#404040">${t}</text>`;
    const legend = [[342, '#62a5e4', 378, '第一季度'], [534, '#ff8b3a', 567, '第二季度'], [725, '#b0b0b0', 759, '第三季度'], [916, '#ffcc00', 950, '第四季度']];
    this.shadowRoot.innerHTML = `
      <style>
        :host { position: absolute; left: 710px; top: 455px; width: 480px; height: 320px; display: block; }
        svg { display: block; overflow: visible; }
      </style>
      <svg width="480" height="320" viewBox="0 0 1440 960">
        <defs>
          <linearGradient id="og"><stop offset="0" stop-color="#b4601f"/><stop offset=".45" stop-color="#ff8c3a"/><stop offset=".6" stop-color="#ee8133"/><stop offset="1" stop-color="#6b3a13"/></linearGradient>
          <linearGradient id="gg"><stop offset="0" stop-color="#6a6a6a"/><stop offset="1" stop-color="#a8a8a8"/></linearGradient>
          <linearGradient id="bg"><stop offset="0" stop-color="#2c5e84"/><stop offset="1" stop-color="#0b1822"/></linearGradient>
        </defs>
        <rect x="30" y="32" width="1370" height="888" fill="#fff"/>
        <rect x="30" y="32" width="1370" height="888" fill="none" stroke="#a5a9b4" stroke-width="3" stroke-dasharray="4 4"/>
        <rect x="38" y="40" width="1354" height="872" fill="none" stroke="#d6d9e2" stroke-width="3"/>
        <text x="715" y="120" text-anchor="middle" font-size="54" fill="#6f6f6f">销量</text>
        <path d="M360 412L697 410V470L665 480 662 445H360Z" fill="#ffcc00"/>
        <path d="M697 410L960 312V360L770 433V478L715 462 697 470Z" fill="#b38a00"/>
        <path d="M360 412C400 310 540 253 690 253 800 253 900 280 960 312L697 410Z" fill="#ffcd05" stroke="#fff" stroke-width="4" stroke-linejoin="round"/>
        <path d="M1058 532C1090 510 1110 480 1110 445V550C1105 585 1085 610 1055 630Z" fill="url(#bg)" stroke="#fff" stroke-width="3"/>
        <path d="M770 435L1058 532 1055 630 1005 610 1003 563 770 478Z" fill="#5a97cf"/>
        <path d="M770 435L1033 337C1085 375 1110 405 1110 445 1110 480 1090 510 1058 532Z" fill="#62a5e4" stroke="#fff" stroke-width="4"/>
        <path d="M320 447C325 490 345 525 378 548L384 645C340 620 320 580 320 500Z" fill="url(#gg)"/>
        <path d="M378 548L660 445 664 480 432 570V628L384 645Z" fill="#757575" stroke="#fff" stroke-width="3"/>
        <path d="M320 447L660 443 378 548C345 525 325 490 320 447Z" fill="#b0b0b0" stroke="#fff" stroke-width="4"/>
        <path d="M436 575C510 620 610 642 720 642 830 642 930 617 1003 570V665C930 715 830 742 720 742 610 742 510 715 436 668Z" fill="url(#og)"/>
        <path d="M715 462L1005 563C930 615 830 640 720 640 610 640 510 615 432 568Z" fill="#ff8b3a" stroke="#fff" stroke-width="4"/>
        ${label(645, 348, 40)}${label(939, 444, 20)}${label(498, 484, 10)}${label(721, 564, 30)}
        ${dots.map(([x, y]) => `<circle cx="${x}" cy="${y}" r="8.500" fill="#fff" stroke="#666" stroke-width="3"/>`).join('')}
        ${big.map(([x, y]) => `<circle cx="${x}" cy="${y}" r="16.500" fill="#fff" stroke="#555" stroke-width="3"/>`).join('')}
        ${legend.map(([x, c, tx, t]) => `<rect x="${x}" y="848" width="16" height="16" fill="${c}"/><text x="${tx}" y="868" font-size="35" fill="#808080">${t}</text>`).join('')}
      </svg>`;
  }
}

class ChartTools extends HTMLElement {
  constructor() { super(); this.attachShadow({ mode: 'open' }); }
  connectedCallback() {
    const checks = ['图表标题', '数据标签', '图例'];
    const tools = [
      '<rect x="1.500" y="10.500" width="4" height="6" stroke="#5b6170"/><rect x="7.500" y="3.500" width="4" height="13" stroke="#4d86d8"/><path d="M14 6h6M14 10h6M14 14h6" stroke="#3f4858"/>',
      '<path d="M3 19c-1-3 1-5 3-6l3 3c-1 2-3 4-6 3z" stroke="#4d86d8"/><path d="M8 12l9-9 3 2-9 10z" stroke="#3f4858"/>',
      '<path d="M2.500 3.500h17l-7 8v8l-3-2v-6z" stroke="#4d86d8"/>',
      '<path d="M9 2h4l.5 2.500 2-1 3 3-1 2L20 9.500v3l-2.500.5 1 2-3 3-2-1L13 20H9l-.5-2.500-2 1-3-3 1-2L2 13V9l2.500-.5-1-2 3-3 2 1z" stroke="#3f4858"/><circle cx="11" cy="11" r="3" stroke="#4d86d8"/>',
      '<path d="M11 2a8 8 0 0 1 4 15v2H7v-2A8 8 0 0 1 11 2zM8 21h6" stroke="#3f4858"/><path d="M12 5l-4 7h3l-1 5 4-7h-3z" fill="#f5a623"/>'
    ];
    this.shadowRoot.innerHTML = `
      <style>
        :host { position: absolute; left: 1188px; top: 472px; display: flex; align-items: flex-start; white-space: nowrap; }
        .col { display: flex; flex-direction: column; gap: 11px; }
        .b { width: 28px; height: 28px; background: #fff; box-shadow: 1px 1px 4px rgba(0,0,0,.25); display: flex; align-items: center; justify-content: center; box-sizing: border-box; }
        .b.on { background: #e7e9ef; border: 1px solid #b7bcc8; box-shadow: none; }
        .pop { margin-left: 7px; width: 144px; height: 114px; background: #fafafa; border: 1px solid #dcdfe4; box-sizing: border-box; box-shadow: 1px 2px 4px rgba(0,0,0,.2); position: relative; padding: 14px 0 0 18px; color: #3c4250; }
        .pop::before { content: ""; position: absolute; left: -5px; top: 10px; width: 8px; height: 8px; background: #fafafa; transform: rotate(45deg); border-left: 1px solid #dcdfe4; border-bottom: 1px solid #dcdfe4; }
        .tabs { display: flex; line-height: 18px; }
        .tabs .off { color: #b3b6bd; padding-right: 5px; border-right: 1px solid #dcdfe4; margin-right: 9px; }
        .ck { display: flex; align-items: center; gap: 5px; height: 21px; margin-left: 3px; line-height: 21px; }
        .tabs + .ck { margin-top: 9px; }
        .ck i { width: 13px; height: 13px; border: 1px solid #adb1bc; border-radius: 2px; box-sizing: border-box; background: #fff; display: flex; align-items: center; justify-content: center; }
      </style>
      <div class="col">${tools.map((t, i) => `<div class="b ${i ? '' : 'on'}"><svg width="22" height="22" viewBox="0 0 22 22" fill="none">${t}</svg></div>`).join('')}</div>
      <div class="pop">
        <div class="tabs"><span class="off">图表元素</span><span>快速布局</span></div>
        ${checks.map(c => `<div class="ck"><i><svg width="9" height="8"><path d="M1 4l2.500 2.500L8 1" fill="none" stroke="#3c4250" stroke-width="1.500"/></svg></i>${c}</div>`).join('')}
      </div>`;
  }
}

class ImeBox extends HTMLElement {
  constructor() { super(); this.attachShadow({ mode: 'open' }); }
  connectedCallback() {
    this.shadowRoot.innerHTML = `
      <style>
        :host { position: absolute; left: 1152px; top: 1011px; width: 59px; height: 25px; background: #fff; border-radius: 5px; box-shadow: 0 1px 4px rgba(0,0,0,.45); display: flex; align-items: center; justify-content: center; gap: 5px; font-size: 13px; color: #333; }
      </style>
      CH <svg width="10" height="13" fill="none" stroke="#333"><path d="M4 .5c4 3 4 8 -3 12 5 0 8-2 8-6S7 1 4 .5z"/></svg> 简`;
  }
}

class WaterMark extends HTMLElement {
  constructor() { super(); this.attachShadow({ mode: 'open' }); }
  connectedCallback() {
    this.shadowRoot.innerHTML = `
      <style>
        :host { position: absolute; left: 1476px; top: 986px; width: 160px; height: 52px; display: block; }
        .a { position: absolute; left: 47px; top: 1px; font-size: 20px; font-weight: bold; color: #2f7fd0; text-shadow: 0 0 2px #fff, 0 0 2px #fff; white-space: nowrap; font-family: "Noto Sans CJK SC", sans-serif; line-height: 24px; }
        .b { position: absolute; left: 47px; top: 31px; font-size: 15.500px; font-weight: bold; color: #58b85a; text-shadow: 0 0 2px #fff; white-space: nowrap; line-height: 20px; }
        svg { position: absolute; left: 0; top: 0; }
      </style>
      <svg width="48" height="44" viewBox="0 0 48 44">
        <defs><linearGradient id="gy" x1="0" y1="0" x2="1" y2="0"><stop offset="0" stop-color="#5fbf5a"/><stop offset=".7" stop-color="#a8d04a"/><stop offset="1" stop-color="#f0c419"/></linearGradient></defs>
        <path d="M46 3C30 3 6 10 1 25-1 32 8 36 14 35 7 32 6 26 11 20 18 12 32 6 46 3z" fill="#74a9e0"/>
        <path d="M30 15C20 16 12 21 13 27 14 31 20 31 24 30 18 29 17 25 20 22 22 19 26 17 30 15z" fill="#4d8fc9"/>
        <path d="M10 36C20 42 36 42 38 28 38 24 34 20 30 20 33 24 33 30 26 33 20 36 15 36 10 36z" fill="url(#gy)"/>
      </svg>
      <div class="a">极光下载站</div>
      <div class="b">www.xz7.com</div>`;
  }
}

// flechas rojas puestas encima de la captura
class RedArrows extends HTMLElement {
  constructor() { super(); this.attachShadow({ mode: 'open' }); }
  connectedCallback() {
    const arrows = [
      'M1311 103L1314 101 1476 192 1478 189 1495 208 1468 203 1471 197 1310 105Z',
      'M1269 358L1269 355 1331 350 1329 347 1356 352 1329 360 1330 356Z',
      'M1276 429L1276 427 1329 420 1327 416 1353 419 1328 428 1329 424Z',
      'M1162 842L1160 843 1095 717 1091 720 1086 694 1104 712 1099 715Z'
    ];
    this.shadowRoot.innerHTML = `
      <style>
        :host { position: absolute; left: 0; top: 0; width: 1636px; height: 1038px; display: block; pointer-events: none; z-index: 5; }
        svg { display: block; }
      </style>
      <svg width="1636" height="1038">
        <defs><filter id="sh" x="-20%" y="-20%" width="140%" height="140%"><feDropShadow dx="2" dy="2" stdDeviation="2" flood-color="#000" flood-opacity=".4"/></filter></defs>
        <g filter="url(#sh)">${arrows.map(d => `<path d="${d}" fill="#ee0c0c" stroke="#ee0c0c"/>`).join('')}</g>
        <path d="M1485.500 455.500v15l3.500-3.500 2.500 6 2.500-1-2.500-6h5z" fill="#fff" stroke="#222"/>
      </svg>`;
  }
}

customElements.define('wps-tabbar', WpsTabbar);
customElements.define('wps-menu', WpsMenu);
customElements.define('rb-button', RbButton);
customElements.define('rb-gallery', RbGallery);
customElements.define('wps-ribbon', WpsRibbon);
customElements.define('wps-formula', WpsFormula);
customElements.define('wps-sheet', WpsSheet);
customElements.define('wps-sheet-tabs', WpsSheetTabs);
customElements.define('prop-slider', PropSlider);
customElements.define('wps-panel', WpsPanel);
customElements.define('wps-strip', WpsStrip);
customElements.define('wps-status', WpsStatus);
customElements.define('chart-pie-of-pie', ChartPieOfPie);
customElements.define('chart-pie-3d', ChartPie3d);
customElements.define('chart-tools', ChartTools);
customElements.define('ime-box', ImeBox);
customElements.define('water-mark', WaterMark);
customElements.define('red-arrows', RedArrows);
</script>
</body>
</html>
